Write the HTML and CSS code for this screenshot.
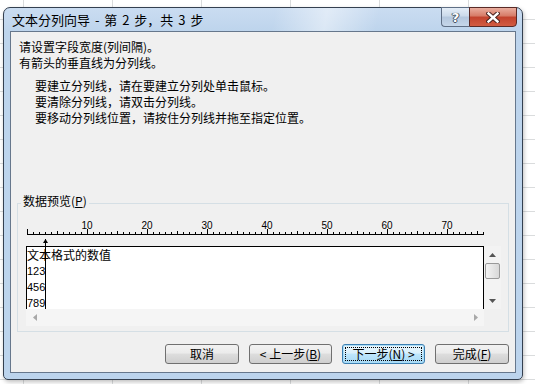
FILE: index.html
```html
<!DOCTYPE html>
<html lang="zh-CN">
<head>
    <meta charset="UTF-8">
    <title>文本分列向导</title>
    <link rel="stylesheet" href="styles.css">
</head>
<body>

<div class="window">

    <!--title bar-->
    <div class="titlebar">
        <span class="title">文本分列向导 - 第 2 步，共 3 步</span>
        <div class="caption_buttons">
            <div class="help_button">?</div>
            <div class="close_button">
                <svg width="14" height="11" viewBox="0 0 14 11">
                    <path d="M2.5 1.5 L11.5 9.5 M11.5 1.5 L2.5 9.5" stroke="#4a2320" stroke-width="4.4" stroke-linecap="square"/>
                    <path d="M2.5 1.5 L11.5 9.5 M11.5 1.5 L2.5 9.5" stroke="#ffffff" stroke-width="2.4" stroke-linecap="square"/>
                </svg>
            </div>
        </div>
    </div>

    <div class="client">

        <div class="intro">
            <p>请设置字段宽度(列间隔)。</p>
            <p>有箭头的垂直线为分列线。</p>
        </div>

        <div class="steps">
            <p>要建立分列线，请在要建立分列处单击鼠标。</p>
            <p>要清除分列线，请双击分列线。</p>
            <p>要移动分列线位置，请按住分列线并拖至指定位置。</p>
        </div>

        <!--data preview-->
        <fieldset class="preview_group">
            <legend>数据预览(<u>P</u>)</legend>

            <div class="preview">
                <div class="ruler">
                    <span>10</span><span>20</span><span>30</span><span>40</span><span>50</span><span>60</span><span>70</span>
                </div>
                <div class="arrow_strip"></div>

                <div class="data_grid">
                    <div class="data_box">
                        <div class="data_row">文本格式的数值</div>
                        <div class="data_row num">123</div>
                        <div class="data_row num">456</div>
                        <div class="data_row num">789</div>
                    </div>
                    <div class="vscroll">
                        <div class="scroll_btn">
                            <svg width="7" height="4" viewBox="0 0 7 4"><polygon points="0,4 3.5,0 7,4" fill="#555"/></svg>
                        </div>
                        <div class="thumb"></div>
                        <div class="scroll_btn bottom">
                            <svg width="7" height="4" viewBox="0 0 7 4"><polygon points="0,0 7,0 3.5,4" fill="#555"/></svg>
                        </div>
                    </div>
                    <div class="hscroll">
                        <div class="scroll_btn">
                            <svg width="4" height="7" viewBox="0 0 4 7"><polygon points="4,0 4,7 0,3.5" fill="#a8a8a8"/></svg>
                        </div>
                        <div class="scroll_btn">
                            <svg width="4" height="7" viewBox="0 0 4 7"><polygon points="0,0 4,3.5 0,7" fill="#a8a8a8"/></svg>
                        </div>
                    </div>
                    <div class="corner"></div>
                </div>

                <!--column break line-->
                <svg class="break_line" width="5" height="70" viewBox="0 0 5 70">
                    <polygon points="2.5,0 5,4 0,4" fill="#000"/>
                    <rect x="2" y="0" width="1" height="70" fill="#000"/>
                </svg>
            </div>
        </fieldset>

        <div class="buttons">
            <button class="btn">取消</button>
            <button class="btn wide">&lt; 上一步(<u>B</u>)</button>
            <button class="btn wide default"><span class="focus">下一步(<u>N</u>) &gt;</span></button>
            <button class="btn">完成(<u>F</u>)</button>
        </div>
    </div>
</div>

</body>
</html>
```

FILE: styles.css
```css
body, html {
    margin: 0;
    padding: 0;
    width: 100%;
    height: 100%;
}

body {
    font-family: "Noto Sans CJK SC", "Noto Sans", sans-serif;
    font-size: 12px;
    color: #000;
    background-color: #fff;

    /*spreadsheet grid behind the dialog*/
    background-image:
        repeating-linear-gradient(to right, transparent 0 23px, #dadcdd 23px 24px, transparent 24px 89px),
        repeating-linear-gradient(to bottom, transparent 0 19px, #dadcdd 19px 20px, transparent 20px 24px);
    overflow: hidden;
}

p {
    margin: 0;
}

.window {
    display: flex;
    box-sizing: border-box;
    width: 520px;
    height: 373px;
    margin: 7px 0 0 3px;
    padding: 0 6px 6px 6px;

    flex-direction: column;

    border: 1px solid #344050;
    border-radius: 7px 7px 5px 5px;
    background:
        linear-gradient(100deg, rgba(255,255,255,0) 52%, rgba(255,255,255,0.45) 62%, rgba(255,255,255,0) 72%) top / 100% 24px no-repeat,
        linear-gradient(#cadcf1, #bdd4ec 24px, #bcd4ed);
    box-shadow: 1px 2px 4px rgba(0, 0, 0, 0.25);
}

.titlebar {
    display: flex;
    height: 23px;
    margin: 0 -6px;
    padding: 0 5px 0 8px;

    justify-content: space-between;
    align-items: center;
}

.title {
    font-size: 13px;
    line-height: 16px;
    word-spacing: 2px;
}

.caption_buttons {
    display: flex;
    align-self: flex-start;
    margin-top: -1px;
}

.help_button {
    display: flex;
    box-sizing: border-box;
    width: 28px;
    height: 20px;

    justify-content: center;
    align-items: center;

    border: 1px solid #5f6f85;
    border-right: none;
    border-radius: 0 0 0 4px;
    background: linear-gradient(#e4edf7, #cbdaea 45%, #b4c7dd 50%, #c6d7ea);

    font-family: "DejaVu Sans", sans-serif;
    font-weight: bold;
    font-size: 13px;
    color: #fff;
    text-shadow: 0 0 1px #2e3a4a, 1px 0 0 #4d5a6b, -1px 0 0 #4d5a6b, 0 1px 0 #4d5a6b;
}

.close_button {
    display: flex;
    box-sizing: border-box;
    width: 48px;
    height: 20px;

    justify-content: center;
    align-items: center;

    border: 1px solid #5a2a26;
    border-radius: 0 0 4px 0;
    background: linear-gradient(#eaae9f, #d67a66 45%, #c2422d 50%, #d25c42);
}

.client {
    display: flex;
    flex: 1;

    flex-direction: column;

    border: 1px solid #66778c;
    background: #f0f0f0;
}

.intro {
    padding: 7px 0 0 8px;
    line-height: 16px;
}

.steps {
    margin-top: 7px;
    padding-left: 24px;
    line-height: 16px;
}

/*data preview group*/
.preview_group {
    margin: auto 6px 0 6px;
    padding: 8px 7px 5px 8px;
    min-width: 0;
    border: 1px solid #d5dfe5;
}

.preview_group legend {
    margin-left: -5px;
    padding: 0 2px 4px 2px;
    line-height: 16px;
}

.preview {
    position: relative;
}

.ruler {
    display: flex;
    box-sizing: border-box;
    width: 457px;
    height: 14px;
    margin-left: 1px;
    padding-left: 30px;

    font-family: "Liberation Sans", sans-serif;
    font-size: 10px;
    line-height: 10px;

    background:
        linear-gradient(#000, #000) left bottom / 100% 1px no-repeat,
        repeating-linear-gradient(to right, #000 0 1px, transparent 1px 60px) left bottom / 100% 6px no-repeat,
        repeating-linear-gradient(to right, transparent 0 30px, #000 30px 31px, transparent 31px 60px) left bottom / 100% 4px no-repeat,
        repeating-linear-gradient(to right, #000 0 1px, transparent 1px 6px) left bottom / 100% 3px no-repeat;
}

.ruler span {
    width: 60px;
    text-align: center;
}

.arrow_strip {
    height: 11px;
}

.data_grid {
    display: grid;
    grid-template-columns: 458px 17px;
    grid-template-rows: 63px 17px;
}

.data_box {
    overflow: hidden;
    border: 1px solid #000;
    border-bottom: none;
    background: #fff;
    line-height: 16px;
}

.data_row.num {
    font-family: "Liberation Sans", sans-serif;
    font-size: 11px;
}

.vscroll {
    display: flex;
    flex-direction: column;
    background: #f3f3f3;
}

.hscroll {
    display: flex;
    justify-content: space-between;
    background: #f5f5f5;
}

.corner {
    background: #f0f0f0;
}

.scroll_btn {
    display: flex;
    width: 17px;
    height: 17px;

    justify-content: center;
    align-items: center;
}

.scroll_btn.bottom {
    margin-top: auto;
}

.thumb {
    box-sizing: border-box;
    width: 15px;
    height: 16px;
    margin: 0 1px;
    border: 1px solid #999;
    border-radius: 2px;
    background: linear-gradient(to right, #f4f4f4, #e6e6e6 50%, #d8d8d8);
}

.break_line {
    position: absolute;
    left: 17px;
    top: 18px;
}

/*bottom buttons*/
.buttons {
    display: flex;
    margin-top: 12px;
    padding: 0 6px 8px 0;

    justify-content: flex-end;
    gap: 10px;
}

.btn {
    display: flex;
    box-sizing: border-box;
    width: 74px;
    height: 20px;
    padding: 0;

    justify-content: center;
    align-items: center;

    font-family: inherit;
    font-size: 12px;
    line-height: 14px;
    color: #000;

    border: 1px solid #707070;
    border-radius: 3px;
    background: linear-gradient(#f2f2f2, #ebebeb 45%, #dddddd 50%, #cfcfcf);
}

.btn.wide {
    width: 83px;
}

.btn.default {
    border-color: #3c7fb1;
    box-shadow: inset 0 0 0 1px #a9dcf6;
    background: linear-gradient(#eaf6fd, #d9f0fc 45%, #bee6fd 50%, #a7d9f5);
}

.btn .focus {
    display: flex;
    box-sizing: border-box;
    width: 77px;
    height: 14px;

    justify-content: center;
    align-items: center;

    border: 1px dotted #000;
}
```
